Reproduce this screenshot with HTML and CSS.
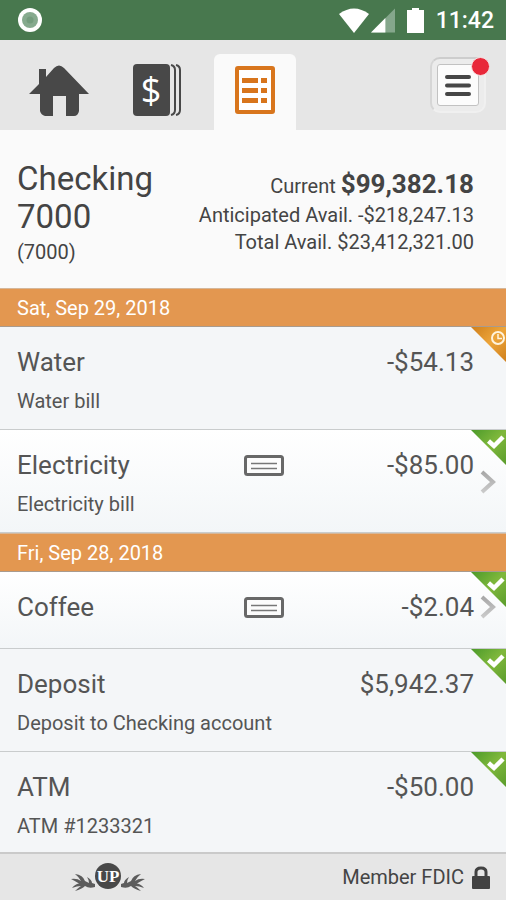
FILE: index.html
```html
<!DOCTYPE html>
<html lang="en">
<head>
  <meta charset="UTF-8">
  <meta name="viewport" content="width=device-width, initial-scale=1.0">
  <title>Checking 7000</title>
  <link rel="stylesheet" href="styles.css">
</head>
<body>
  <!-- Shared icons -->
  <svg class="icon-defs" aria-hidden="true">
    <defs>
      <linearGradient id="green" x1="0" y1="0" x2="1" y2="1">
        <stop offset="0" stop-color="#4b9a2a"/>
        <stop offset="0.5" stop-color="#80b83c"/>
        <stop offset="1" stop-color="#5a9c2c"/>
      </linearGradient>
      <linearGradient id="amber" x1="0" y1="0" x2="1" y2="1">
        <stop offset="0" stop-color="#cf7f1c"/>
        <stop offset="0.5" stop-color="#eda53a"/>
        <stop offset="1" stop-color="#cf7f1c"/>
      </linearGradient>
      <linearGradient id="grey" x1="0" y1="0" x2="0" y2="1">
        <stop offset="0" stop-color="#a8a8a8"/>
        <stop offset="1" stop-color="#cacaca"/>
      </linearGradient>
    </defs>
    <symbol id="cleared" viewBox="0 0 36 35">
      <path d="M1 0H36V35Z" fill="url(#green)"/>
      <path d="M18.500 11L24 16L33 7" fill="none" stroke="#fff" stroke-width="4.500"/>
    </symbol>
    <symbol id="pending" viewBox="0 0 36 35">
      <path d="M1 0H36V35Z" fill="url(#amber)"/>
      <circle cx="28" cy="11" r="6" fill="none" stroke="#fff3dc" stroke-width="2"/>
      <path d="M28 7V11.500H32" fill="none" stroke="#fff3dc" stroke-width="1.500"/>
    </symbol>
    <symbol id="check" viewBox="0 0 40 21">
      <rect x="1.500" y="1.500" width="37" height="18" rx="2" fill="#fcfcfc" stroke="#686868" stroke-width="3"/>
      <path d="M7 8.500H33M7 13.500H33" stroke="#777" stroke-width="1.500"/>
    </symbol>
    <symbol id="chevron" viewBox="0 0 16 24">
      <path d="M2 2L13 12L2 22" fill="none" stroke="url(#grey)" stroke-width="4"/>
    </symbol>
    <symbol id="branch" viewBox="0 0 24 18">
      <path d="M0 6Q6 5 10 8Q8 4 4 1Q12 2 14 8L18 10Q18 7 16 4Q21 7 21 10L24 11V14Q18 16 14 13Q11 16 4 18Q7 15 10 13Q6 13 1 15Q4 11 8 10.500Q4 8 0 6Z" fill="#5c5c5c"/>
    </symbol>
  </svg>

  <!-- Status bar -->
  <div class="status-bar">
    <svg class="record" viewBox="0 0 26 26" aria-hidden="true">
      <circle cx="13" cy="13" r="12" fill="#fff"/>
      <circle cx="13" cy="13" r="8" fill="#86aa8e"/>
      <circle cx="13" cy="13" r="3.500" fill="#749c7d"/>
    </svg>
    <svg class="wifi" viewBox="0 0 30 25" aria-hidden="true">
      <path d="M0 6Q15 -5 30 6L15 25Z" fill="#fff"/>
    </svg>
    <svg class="signal" viewBox="0 0 25 25" aria-hidden="true">
      <path d="M25 0V25H0Z" fill="#85a78c"/>
      <path d="M15 10V25H0Z" fill="#fff"/>
    </svg>
    <svg class="battery" viewBox="0 0 17 25" aria-hidden="true">
      <path d="M5 0H12V2H17V25H0V2H5Z" fill="#fff"/>
    </svg>
    <span class="clock">11:42</span>
  </div>

  <!-- Tabs -->
  <nav class="tabs">
    <a href="#home" class="tab" aria-label="Home">
      <svg width="60" height="52" viewBox="0 0 60 52">
        <path d="M0 30L10 20V5H17V13L25 4Q30 -1 35 4L60 30H50V47Q49 52 45 52H37V32H24V52H16Q12 51 11 47V30Z" fill="#484848"/>
      </svg>
    </a>
    <a href="#accounts" class="tab" aria-label="Accounts">
      <svg width="48" height="52" viewBox="0 0 48 52">
        <rect width="37" height="52" rx="4" fill="#484848"/>
        <path d="M38 1Q42 2 42 6V46Q42 50 38 51M43 1Q47 2 47 6V46Q47 50 43 51" fill="none" stroke="#484848" stroke-width="2"/>
        <text x="18" y="39" class="dollar">$</text>
      </svg>
    </a>
    <a href="#register" class="tab active" aria-label="Register">
      <svg width="40" height="48" viewBox="0 0 40 48">
        <rect x="2" y="2" width="36" height="44" rx="1" fill="#fff" stroke="#d8751c" stroke-width="4"/>
        <path d="M7 14.500H23M7 24.500H23M7 34.500H23M26 14.500H32M26 24.500H32M26 34.500H32" stroke="#d8751c" stroke-width="5"/>
      </svg>
    </a>
    <button class="menu" type="button" aria-label="Menu">
      <span class="menu-face">
        <svg width="28" height="24" viewBox="0 0 28 24">
          <path d="M3 4H25M3 12.500H25M3 21H25" stroke="#464646" stroke-width="4" stroke-linecap="round"/>
        </svg>
      </span>
      <span class="alert"></span>
    </button>
  </nav>

  <!-- Account summary -->
  <header class="account">
    <div class="account-name">
      <h1>Checking 7000</h1>
      <p>(7000)</p>
    </div>
    <div class="balances">
      <p class="current">Current <strong>$99,382.18</strong></p>
      <p>Anticipated Avail. -$218,247.13</p>
      <p>Total Avail. $23,412,321.00</p>
    </div>
  </header>

  <!-- Transactions -->
  <main class="register">
    <h2>Sat, Sep 29, 2018</h2>
    <div class="entry">
      <h3>Water</h3>
      <span class="amount">-$54.13</span>
      <p>Water bill</p>
      <svg class="corner"><use href="#pending"/></svg>
    </div>
    <div class="entry has-image">
      <h3>Electricity</h3>
      <svg class="check"><use href="#check"/></svg>
      <span class="amount">-$85.00</span>
      <p>Electricity bill</p>
      <svg class="chevron"><use href="#chevron"/></svg>
      <svg class="corner"><use href="#cleared"/></svg>
    </div>

    <h2>Fri, Sep 28, 2018</h2>
    <div class="entry has-image">
      <h3>Coffee</h3>
      <svg class="check"><use href="#check"/></svg>
      <span class="amount">-$2.04</span>
      <svg class="chevron"><use href="#chevron"/></svg>
      <svg class="corner"><use href="#cleared"/></svg>
    </div>
    <div class="entry">
      <h3>Deposit</h3>
      <span class="amount">$5,942.37</span>
      <p>Deposit to Checking account</p>
      <svg class="corner"><use href="#cleared"/></svg>
    </div>
    <div class="entry">
      <h3>ATM</h3>
      <span class="amount">-$50.00</span>
      <p>ATM #1233321</p>
      <svg class="corner"><use href="#cleared"/></svg>
    </div>
  </main>

  <footer>
    <svg class="logo" viewBox="0 0 74 30" role="img" aria-label="UP">
      <use href="#branch" x="0" y="11" width="24" height="18"/>
      <use href="#branch" x="0" y="11" width="24" height="18" transform="translate(74 0) scale(-1 1)"/>
      <circle cx="37" cy="14" r="13" fill="#484848"/>
      <text x="37" y="20" class="logo-text">UP</text>
    </svg>
    <span class="fdic">Member FDIC</span>
    <svg class="lock" viewBox="0 0 18 23" aria-hidden="true">
      <path d="M4 11V6Q4 2 9 2T14 6V11" fill="none" stroke="#424242" stroke-width="3"/>
      <rect y="10" width="18" height="13" rx="1" fill="#424242"/>
    </svg>
  </footer>
</body>
</html>
```

FILE: styles.css
```css
* {
  box-sizing: border-box;
}

body {
  margin: 0;
  height: 100vh;
  display: flex;
  flex-direction: column;
  font-family: Roboto, "Liberation Sans", sans-serif;
  font-size: 20px;
  color: #444;
  background-color: #fafafa;
}

h1, h2, h3, p {
  margin: 0;
  font-weight: normal;
}

.icon-defs {
  position: absolute;
  width: 0;
  height: 0;
}

/* Status bar */
.status-bar {
  flex: none;
  display: flex;
  align-items: center;
  height: 40px;
  padding: 0 12px 0 17px;
  background-color: #48784e;
}

.record {
  width: 26px;
  height: 26px;
  margin-right: auto;
}

.wifi {
  width: 30px;
  height: 25px;
}

.signal {
  width: 24px;
  height: 25px;
  margin: 0 12px 0 2px;
}

.battery {
  width: 17px;
  height: 25px;
  margin-right: 12px;
}

.clock {
  font-size: 23px;
  font-weight: 500;
  color: #fff;
}

/* Tabs */
.tabs {
  flex: none;
  display: flex;
  align-items: flex-end;
  height: 90px;
  padding: 0 20px 0 18px;
  background-color: #e6e6e6;
}

.tab {
  display: flex;
  align-items: center;
  justify-content: center;
  width: 82px;
  height: 76px;
  margin-right: 16px;
  padding-bottom: 5px;
  border-radius: 6px 6px 0 0;
}

.tab.active {
  background-color: #fafafa;
}

.dollar {
  font-family: "Open Sans", "Noto Sans", sans-serif;
  font-size: 36px;
  fill: #fff;
  text-anchor: middle;
}

.menu {
  position: relative;
  width: 56px;
  height: 56px;
  margin: 0 0 17px auto;
  padding: 5px;
  border: 2px solid #f0f0f0;
  border-top-color: #cdcdcd;
  border-left-color: #d6d6d6;
  border-radius: 10px;
  background-color: #ececec;
}

.menu-face {
  display: flex;
  align-items: center;
  justify-content: center;
  height: 100%;
  border: 1px solid #c2c2c2;
  border-radius: 3px;
  background-color: #fcfcfc;
}

.alert {
  position: absolute;
  top: -2px;
  right: -6px;
  width: 19px;
  height: 19px;
  border: 1px solid #f7dfe0;
  border-radius: 50%;
  background-color: #e8283a;
}

/* Account summary */
.account {
  flex: none;
  display: flex;
  justify-content: space-between;
  padding: 30px 32px 20px 17px;
}

.account-name {
  width: 150px;
  line-height: 32px;
}

.account h1 {
  font-size: 33px;
  line-height: 38px;
}

.balances {
  padding-top: 8px;
  line-height: 27px;
  text-align: right;
}

.balances .current {
  line-height: 32px;
}

.balances strong {
  font-size: 26px;
}

/* Transactions */
.register {
  flex: 1;
  min-height: 0;
  overflow-y: auto;
  scrollbar-width: none;
}

.register h2 {
  height: 39px;
  padding: 0 17px;
  border-top: 1px solid #d5b79a;
  border-bottom: 1px solid #a99b8e;
  font-size: 20px;
  line-height: 39px;
  color: #fff;
  background-color: #e39750;
}

.entry {
  position: relative;
  display: grid;
  grid-template-columns: 6fr 40px 5fr 22px;
  align-content: start;
  min-height: 77px;
  padding: 13px 10px 11px 17px;
  border-bottom: 1px solid #c9cccd;
  color: #555;
  background-color: #f4f6f8;
}

.entry:last-child {
  border-bottom: none;
}

.entry.has-image {
  background: linear-gradient(#fff, #f3f6f8);
}

.entry h3 {
  grid-column: 1;
  font-size: 26px;
  line-height: 44px;
}

.entry p {
  grid-column: 1 / 4;
  grid-row: 2;
  line-height: 34px;
}

.amount {
  grid-column: 3;
  font-size: 26px;
  line-height: 44px;
  text-align: right;
}

.check {
  grid-column: 2;
  align-self: center;
  width: 40px;
  height: 21px;
}

.chevron {
  grid-column: 4;
  grid-row: 1 / 3;
  align-self: center;
  justify-self: end;
  width: 16px;
  height: 24px;
}

/* Status flag over the corner of a row */
.corner {
  position: absolute;
  top: 0;
  right: 0;
  width: 36px;
  height: 35px;
}

footer {
  flex: none;
  display: flex;
  align-items: center;
  height: 48px;
  padding: 0 16px 0 71px;
  border-top: 2px solid #cacaca;
  background-color: #e6e6e6;
}

.logo {
  width: 74px;
  height: 30px;
  margin-right: auto;
}

.logo-text {
  font-family: "Liberation Serif", serif;
  font-size: 17px;
  font-weight: bold;
  fill: #fff;
  text-anchor: middle;
}

.lock {
  width: 18px;
  height: 23px;
  margin-left: 8px;
}
```
